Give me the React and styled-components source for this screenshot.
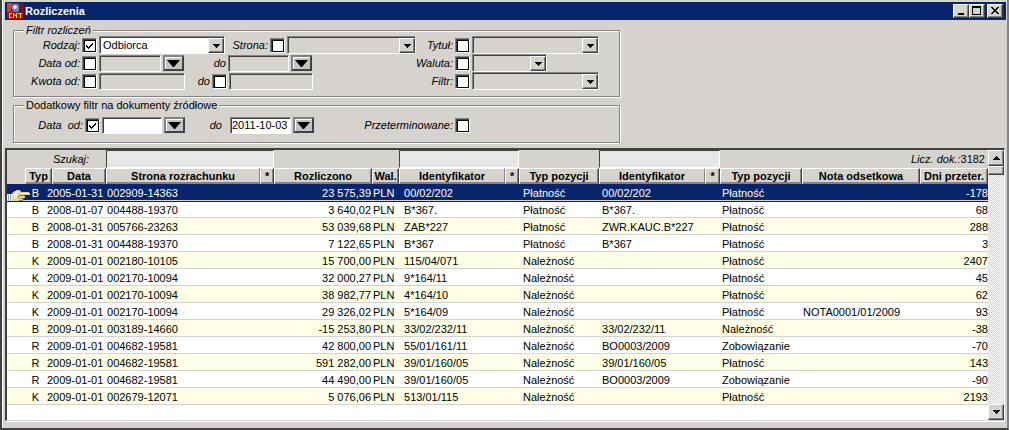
import { useState } from "react"
import styled, { createGlobalStyle, css } from "styled-components"

const rows = [
    ["B", "2005-01-31", "002909-14363", "23 575,39", "00/02/202", "Płatność", "00/02/202", "Płatność", "", "-178"],
    ["B", "2008-01-07", "004488-19370", "3 640,02", "B*367.", "Płatność", "B*367.", "Płatność", "", "68"],
    ["B", "2008-01-31", "005766-23263", "53 039,68", "ZAB*227", "Płatność", "ZWR.KAUC.B*227", "Płatność", "", "288"],
    ["B", "2008-01-31", "004488-19370", "7 122,65", "B*367", "Płatność", "B*367", "Płatność", "", "3"],
    ["K", "2009-01-01", "002180-10105", "15 700,00", "115/04/071", "Należność", "", "Płatność", "", "2407"],
    ["K", "2009-01-01", "002170-10094", "32 000,27", "9*164/11", "Należność", "", "Płatność", "", "45"],
    ["K", "2009-01-01", "002170-10094", "38 982,77", "4*164/10", "Należność", "", "Płatność", "", "62"],
    ["K", "2009-01-01", "002170-10094", "29 326,02", "5*164/09", "Należność", "", "Płatność", "NOTA0001/01/2009", "93"],
    ["B", "2009-01-01", "003189-14660", "-15 253,80", "33/02/232/11", "Należność", "33/02/232/11", "Należność", "", "-38"],
    ["R", "2009-01-01", "004682-19581", "42 800,00", "55/01/161/11", "Należność", "BO0003/2009", "Zobowiązanie", "", "-70"],
    ["R", "2009-01-01", "004682-19581", "591 282,00", "39/01/160/05", "Należność", "39/01/160/05", "Płatność", "", "143"],
    ["R", "2009-01-01", "004682-19581", "44 490,00", "39/01/160/05", "Należność", "BO0003/2009", "Zobowiązanie", "", "-90"],
    ["K", "2009-01-01", "002679-12071", "5 076,06", "513/01/115", "Należność", "", "Płatność", "", "2193"],
]

const columns = [18, 21, 6, 54, 154, 14, 98, 27, 106, 14, 80, 106, 15, 82, null, 68]

function Check({ id, on = false }) {
    const [checked, setChecked] = useState(on)

    return (
        <CheckBox>
            <input id={id} type="checkbox" checked={checked} onChange={() => setChecked(!checked)} />
            {checked && (
                <svg width="9" height="9" shapeRendering="crispEdges">
                    <path d="M1 4h1v1h1v1h1v-1h1v-1h1v-1h1v-1h1v2h-1v1h-1v1h-1v1h-1v1h-1v-1h-1v-1h-1z" />
                </svg>
            )}
        </CheckBox>
    )
}

function Combo({ label, width, value = "" }) {
    return (
        <ComboBox $w={width} $filled={value !== ""}>
            <select aria-label={label} defaultValue={value}>
                <option>{value}</option>
            </select>
            <ComboArrow>
                <svg width="7" height="4" shapeRendering="crispEdges"><path d="M0 0h7v1h-1v1h-1v1h-1v1h-1v-1h-1v-1h-1v-1h-1z" /></svg>
            </ComboArrow>
        </ComboBox>
    )
}

function DateButton({ label }) {
    return (
        <DropButton type="button" aria-label={label}>
            <svg width="13" height="7"><path d="M0 0h13l-6 7h-1z" /></svg>
        </DropButton>
    )
}

function Hand() {
    return (
        <HandIcon width="23" height="13" viewBox="0 1 23 13" shapeRendering="crispEdges">
            <path fill="#f4f6fa" d="M0 8h5v7h-5z" />
            <path fill="#8aa8d0" d="M1 9h1v6h-1zM3 8h1v7h-1z" />
            <path fill="#e8d5a0" d="M5 7h1v-1h1v-1h2v-1h4v1h1v1h8v1h1v2h-6v1h1v2h-1v1h-1v2h-11z" />
            <path fill="#fff6d0" d="M8 6h4v1h-4zM13 7h8v1h-8zM7 8h3v4h-3z" />
            <path fill="#8c7440" d="M12 9h5v1h-5zM13 12h4v1h-4zM12 14h4v1h-4zM11 10h1v2h-1z" />
        </HandIcon>
    )
}

function Search({ label }) {
    return <SearchInput type="text" aria-label={label} />
}

function App() {
    return (
        <Window>
            <GlobalStyle />
            <TitleBar>
                <svg width="16" height="16" viewBox="0 0 16 16">
                    <rect width="16" height="16" fill="#b00c10" />
                    <path d="M0 0h6l-3 9h-3z" fill="#d84030" />
                    <circle cx="9" cy="5" r="4" fill="#5c8cc0" />
                    <circle cx="8" cy="4" r="2" fill="#d8f0fc" />
                    <path d="M12 1h3v8h-3z" fill="#601428" />
                    <path shapeRendering="crispEdges" fill="#ffee00" d="M2 10h3v1h-2v3h2v1h-3zM6 10h1v1h1v1h1v-2h1v5h-1v-2h-1v-1h-1v3h-1zM11 10h4v1h-1v4h-1v-4h-2z" />
                </svg>
                <h1>Rozliczenia</h1>
                <WindowButton type="button" aria-label="Minimalizuj">
                    <svg width="10" height="10" shapeRendering="crispEdges"><path d="M2 7h6v2h-6z" /></svg>
                </WindowButton>
                <WindowButton type="button" aria-label="Maksymalizuj">
                    <svg width="10" height="10" shapeRendering="crispEdges"><path fillRule="evenodd" d="M0 0h9v9h-9zM1 2v6h7v-6z" /></svg>
                </WindowButton>
                <WindowButton type="button" aria-label="Zamknij" $apart>
                    <svg width="10" height="10" shapeRendering="crispEdges"><path d="M1 1h2v1h1v1h2v-1h1v-1h2v1h-1v1h-1v1h-1v1h1v1h1v1h1v1h-2v-1h-1v-1h-2v1h-1v1h-2v-1h1v-1h1v-1h1v-1h-1v-1h-1v-1h-1z" /></svg>
                </WindowButton>
            </TitleBar>

            <Filters>
                <Group>
                    <Legend $italic>Filtr rozliczeń</Legend>
                    <Line>
                        <Label $w={66} htmlFor="rodzaj">Rodzaj:</Label>
                        <Check id="rodzaj" on />
                        <Combo label="Rodzaj" width={126} value="Odbiorca" />
                        <Label $w={41} htmlFor="strona">Strona:</Label>
                        <Check id="strona" />
                        <Combo label="Strona" width={129} />
                        <Label $w={35} htmlFor="tytul">Tytuł:</Label>
                        <Check id="tytul" />
                        <Combo label="Tytuł" width={127} />
                    </Line>
                    <Line>
                        <Label $w={66} htmlFor="data">Data od:</Label>
                        <Check id="data" />
                        <Field $w={62} aria-label="Data od" />
                        <DateButton label="Wybierz datę od" />
                        <Label $w={40} htmlFor="dataDo">do</Label>
                        <Field $w={61} id="dataDo" />
                        <DateButton label="Wybierz datę do" />
                        <Label $w={139} htmlFor="waluta">Waluta:</Label>
                        <Check id="waluta" />
                        <Combo label="Waluta" width={75} />
                    </Line>
                    <Line>
                        <Label $w={66} htmlFor="kwota">Kwota od:</Label>
                        <Check id="kwota" />
                        <Field $w={86} aria-label="Kwota od" />
                        <Label $w={23} htmlFor="kwotaDo">do</Label>
                        <Check id="kwotaDo" />
                        <Field $w={84} aria-label="Kwota do" />
                        <Label $w={138} htmlFor="filtr">Filtr:</Label>
                        <Check id="filtr" />
                        <Combo label="Filtr" width={127} />
                    </Line>
                </Group>

                <Group $second>
                    <Legend>Dodatkowy filtr na dokumenty źródłowe</Legend>
                    <Line>
                        <Label $w={69} htmlFor="zrodlo">Data  od:</Label>
                        <Check id="zrodlo" on />
                        <Field $w={60} $filled aria-label="Data źródłowa od" />
                        <DateButton label="Wybierz datę źródłową od" />
                        <Label $w={41} $pad={6} htmlFor="zrodloDo">do</Label>
                        <Field $w={61} $filled id="zrodloDo" defaultValue="2011-10-03" />
                        <DateButton label="Wybierz datę źródłową do" />
                        <Label $w={137} htmlFor="przeterminowane">Przeterminowane:</Label>
                        <Check id="przeterminowane" />
                    </Line>
                </Group>
            </Filters>

            <Grid>
                <TableArea>
                    <Table>
                        <colgroup>
                            {columns.map((w, i) => <Col key={i} $w={w} />)}
                        </colgroup>
                        <thead>
                            <SearchRow>
                                <SearchLabel colSpan={4}>Szukaj:</SearchLabel>
                                <td colSpan={2}><Search label="Szukaj strony" /></td>
                                <td colSpan={2}></td>
                                <td colSpan={2}><Search label="Szukaj identyfikatora" /></td>
                                <td></td>
                                <td colSpan={2}><Search label="Szukaj drugiego identyfikatora" /></td>
                                <Counter colSpan={3}>Licz. dok.:<span>3182</span></Counter>
                            </SearchRow>
                            <tr>
                                <Corner></Corner>
                                <Th colSpan={2}>Typ</Th>
                                <Th>Data</Th>
                                <Th $joined>Strona rozrachunku</Th>
                                <Th>*</Th>
                                <Th>Rozliczono</Th>
                                <Th>Wal.</Th>
                                <Th $joined>Identyfikator</Th>
                                <Th>*</Th>
                                <Th>Typ pozycji</Th>
                                <Th $joined>Identyfikator</Th>
                                <Th>*</Th>
                                <Th>Typ pozycji</Th>
                                <Th>Nota odsetkowa</Th>
                                <Th>Dni przeter.</Th>
                            </tr>
                        </thead>
                        <tbody>
                            {rows.map(([typ, data, strona, kwota, id1, poz1, id2, poz2, nota, dni], i) => (
                                <Row key={i} $selected={i === 0} $odd={i % 2 === 0}>
                                    <Td>{i === 0 && <Hand />}</Td>
                                    <Td $align="center">{typ}</Td>
                                    <Td $pad={1} colSpan={2}>{data}</Td>
                                    <Td $pad={1} colSpan={2}>{strona}</Td>
                                    <Td $pad={1} $align="right">{kwota}</Td>
                                    <Td $pad={1}>PLN</Td>
                                    <Td $pad={5} colSpan={2}>{id1}</Td>
                                    <Td $pad={4}>{poz1}</Td>
                                    <Td $pad={3} colSpan={2}>{id2}</Td>
                                    <Td $pad={2}>{poz2}</Td>
                                    <Td $pad={1}>{nota}</Td>
                                    <Td $align="right">{dni}</Td>
                                </Row>
                            ))}
                        </tbody>
                    </Table>
                </TableArea>
                <ScrollBar>
                    <ScrollButton type="button" aria-label="W górę">
                        <svg width="7" height="4" shapeRendering="crispEdges"><path d="M3 0h1v1h1v1h1v1h1v1h-7v-1h1v-1h1v-1h1z" /></svg>
                    </ScrollButton>
                    <Thumb />
                    <Track />
                    <ScrollButton type="button" aria-label="W dół">
                        <svg width="7" height="4" shapeRendering="crispEdges"><path d="M0 0h7v1h-1v1h-1v1h-1v1h-1v-1h-1v-1h-1v-1h-1z" /></svg>
                    </ScrollButton>
                </ScrollBar>
            </Grid>
        </Window>
    )
} export default App


const GlobalStyle = createGlobalStyle`
    * {
        box-sizing: border-box;
    }

    body {
        margin: 0;
        background-color: #d6d3ce;
        font-family: "Liberation Sans", Arial, sans-serif;
        font-size: 11px;
        color: #000;
    }

    button, input, select {
        margin: 0;
        padding: 0;
        font: inherit;
        color: inherit;
    }

    svg {
        display: block;
        flex: none;
    }
`

const raised = css`
    border: 1px solid;
    border-color: #fff #404040 #404040 #fff;
    box-shadow: inset -1px -1px #848284;
    background-color: #d6d3ce;
`

const sunken = css`
    border: 1px solid;
    border-color: #848284 #fff #fff #848284;
    box-shadow: inset 1px 1px #424142;
`

const Window = styled.main`
    display: flex;
    flex-direction: column;
    min-height: 100vh;
    padding: 2px 1px 7px 3px;
    border: solid #424142;
    border-width: 0 2px 2px 2px;
    border-right-color: #848284;
    box-shadow: inset 1px 0 #fff;
    background-color: #d6d3ce;
`

const TitleBar = styled.header`
    display: flex;
    align-items: center;
    height: 18px;
    padding: 0 3px 0 2px;
    background-color: #08246b;

    h1 {
        flex: 1;
        margin: 0 0 0 2px;
        font-size: 11px;
        line-height: 18px;
        color: #fff;
    }
`

const WindowButton = styled.button`
    ${raised}
    display: flex;
    align-items: center;
    justify-content: center;
    width: 16px;
    height: 14px;
    margin-left: ${({ $apart }) => ($apart ? "2px" : "0")};
`

const Filters = styled.form`
    display: flex;
    flex-direction: column;
    gap: 2px;
    padding: 4px 8px 5px;
`

const Group = styled.fieldset`
    width: 100%;
    max-width: 607px;
    margin: 0;
    padding: ${({ $second }) => ($second ? "5px 0 8px" : "0 0 6px")};
    border: 1px solid #848284;
    box-shadow: 1px 1px #fff, inset 1px 1px #fff;
`

const Legend = styled.legend`
    height: 12px;
    margin-left: 10px;
    padding: 0 2px;
    line-height: 12px;
    background-color: #d6d3ce;
    font-style: ${({ $italic }) => ($italic ? "italic" : "normal")};
`

const Line = styled.div`
    display: flex;
    align-items: center;
    gap: 2px;
    height: 18px;
`

const Label = styled.label`
    flex: none;
    width: ${({ $w }) => $w}px;
    padding-right: ${({ $pad = 0 }) => $pad}px;
    text-align: right;
    font-style: italic;
    white-space: pre;
`

const CheckBox = styled.span`
    display: grid;
    flex: none;
    place-items: center;
    width: 15px;
    height: 15px;
    border: 1px solid;
    border-color: #848284 #fff #fff #848284;

    input, svg {
        grid-area: 1 / 1;
    }

    input {
        width: 13px;
        height: 13px;
        appearance: none;
        border: solid #424142;
        border-width: 1px 0 0 1px;
        background-color: #fff;
        box-shadow: inset 0 0 0 1px #000;
    }

    svg {
        pointer-events: none;
        z-index: 1;
    }
`

const Field = styled.input.attrs({ type: "text" })`
    ${sunken}
    flex: none;
    width: ${({ $w }) => $w}px;
    height: 17px;
    padding-left: 1px;
    background-color: ${({ $filled }) => ($filled ? "#fff" : "#d6d3ce")};
`

const ComboBox = styled.div`
    position: relative;
    flex: none;
    width: ${({ $w }) => $w}px;
    height: 18px;

    select {
        ${sunken}
        display: block;
        width: 100%;
        height: 18px;
        padding-left: 3px;
        appearance: none;
        border-radius: 0;
        background-color: ${({ $filled }) => ($filled ? "#fff" : "#d6d3ce")};
    }
`

const ComboArrow = styled.span`
    ${raised}
    position: absolute;
    top: 2px;
    right: 1px;
    bottom: 1px;
    display: flex;
    align-items: center;
    justify-content: center;
    width: 16px;
    pointer-events: none;
`

const DropButton = styled.button`
    display: flex;
    flex: none;
    align-items: center;
    justify-content: center;
    width: 21px;
    height: 16px;
    border: 2px solid;
    border-color: #848284 #424142 #424142 #848284;
    background-color: #c6c3c6;
    box-shadow: inset 1px 1px #fff;
`

const Grid = styled.section`
    display: flex;
    flex: 1;
    margin-right: 1px;
    border: solid #424142;
    border-width: 2px 1px 1px 2px;
    border-right-color: #fff;
    border-bottom-color: #d6d3ce;
    box-shadow: 0 1px #fff;
    background-color: #fff;
`

const TableArea = styled.div`
    flex: 1;
    min-width: 0;
`

const Table = styled.table`
    width: 100%;
    table-layout: fixed;
    border-collapse: separate;
    border-spacing: 0;
    white-space: nowrap;

    td, th {
        padding: 0;
    }
`

const Col = styled.col`
    width: ${({ $w }) => ($w ? `${$w}px` : "auto")};
`

const SearchRow = styled.tr`
    height: 18px;
    background-color: #d6d3ce;
    font-style: italic;
`

const SearchLabel = styled.td`
    && {
        padding-right: 17px;
    }
    text-align: right;
`

const SearchInput = styled.input`
    display: block;
    width: 100%;
    height: 18px;
    border: 1px solid;
    border-color: #424142 #fff #fff #424142;
    background-color: #e7e7e7;
`

const Counter = styled.td`
    && {
        padding-right: 3px;
    }
    text-align: right;

    span {
        font-style: normal;
    }
`

const Corner = styled.td`
    background-color: #d6d3ce;
`

const Th = styled.th`
    height: 16px;
    line-height: 14px;
    border: 1px solid;
    border-color: #fff #424142 #848284 #fff;
    box-shadow: inset -1px -1px #848284;
    ${({ $joined }) => $joined && css`
        border-right-color: #848284;
        box-shadow: inset 0 -1px #848284;
    `}
    background-color: #d6d3ce;
`

const Row = styled.tr`
    height: 17px;
    background-color: ${({ $odd }) => ($odd ? "#ffffe7" : "#fff")};

    ${({ $selected }) => $selected && css`
        position: relative;
        background-color: #08246b;
        box-shadow: 0 1px #08246b;
        color: #fff;
    `}
`

const Td = styled.td`
    height: 17px;
    line-height: 14px;
    border-bottom: 1px solid #d6d3ce;
    text-align: ${({ $align = "left" }) => $align};

    && {
        padding: 2px ${({ $pad = 0 }) => $pad}px 0;
    }
`

const HandIcon = styled.svg`
    overflow: visible;
`

const ScrollBar = styled.div`
    display: flex;
    flex: none;
    flex-direction: column;
    width: 16px;
`

const ScrollButton = styled.button`
    ${raised}
    display: flex;
    align-items: center;
    justify-content: center;
    height: 16px;
`

const Thumb = styled.div`
    ${raised}
    height: 9px;
`

const Track = styled.div`
    flex: 1;
    background: repeating-conic-gradient(#fff 0 25%, #d6d3ce 0 50%) 0 0 / 2px 2px;
`
